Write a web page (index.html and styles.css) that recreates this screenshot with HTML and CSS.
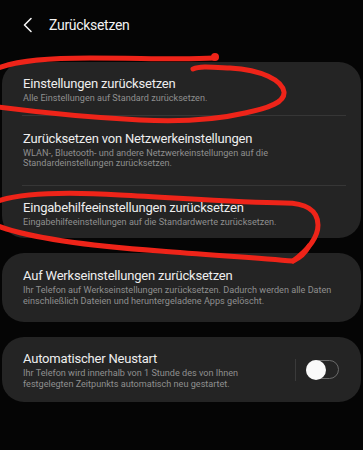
FILE: index.html
```html
<!DOCTYPE html>
<html lang="de">
<head>
<meta charset="utf-8">
<link rel="stylesheet" href="styles.css">
</head>
<body>
<div class="page">
  <header class="header">
    <svg class="back" width="12" height="16" viewBox="0 0 12 16"><path d="M9 1.5 L2.5 8 L9 14.5" fill="none" stroke="#f2f2f2" stroke-width="1.6" stroke-linecap="round" stroke-linejoin="round"/></svg>
    <h1 class="title">Zurücksetzen</h1>
  </header>

  <section class="card">
    <div class="item">
      <div class="item-title">Einstellungen zurücksetzen</div>
      <div class="item-sub">Alle Einstellungen auf Standard zurücksetzen.</div>
    </div>
    <div class="sep"></div>
    <div class="item item-tall">
      <div class="item-title">Zurücksetzen von Netzwerkeinstellungen</div>
      <div class="item-sub">WLAN-, Bluetooth- und andere Netzwerkeinstellungen auf die Standardeinstellungen zurücksetzen.</div>
    </div>
    <div class="sep"></div>
    <div class="item">
      <div class="item-title">Eingabehilfeeinstellungen zurücksetzen</div>
      <div class="item-sub">Eingabehilfeeinstellungen auf die Standardwerte zurücksetzen.</div>
    </div>
  </section>

  <section class="card">
    <div class="item item-tall">
      <div class="item-title">Auf Werkseinstellungen zurücksetzen</div>
      <div class="item-sub">Ihr Telefon auf Werkseinstellungen zurücksetzen. Dadurch werden alle Daten einschließlich Dateien und heruntergeladene Apps gelöscht.</div>
    </div>
  </section>

  <section class="card">
    <div class="item item-row">
      <div class="item-text">
        <div class="item-title">Automatischer Neustart</div>
        <div class="item-sub">Ihr Telefon wird innerhalb von 1 Stunde des von Ihnen festgelegten Zeitpunkts automatisch neu gestartet.</div>
      </div>
      <div class="vdiv"></div>
      <div class="switch"><span class="knob"></span></div>
    </div>
  </section>

  <svg class="scribble" width="363" height="450" viewBox="0 0 363 450">
    <g fill="none" stroke="#ee2419" stroke-width="5" stroke-linecap="round" stroke-linejoin="round">
      <path d="M-2,68 C20,60 50,58 90,58 C140,58 185,60 214,58"/>
      <path d="M193,69 C200,66 210,67 230,68 C262,70 282,80 284,92 C285,102 270,108 245,113 C215,120 180,122 140,120 C100,118 60,115 -2,107"/>
      <path d="M-2,201 C25,192 70,192 120,195 C180,198 240,203 285,203 C305,203 318,210 318,225 C318,240 305,252 293,261"/>
      <path d="M-2,226 C30,238 90,246 160,251 C210,255 260,258 293,261 C300,258 306,252 309,246"/>
    </g>
    <circle cx="215" cy="57" r="4" fill="#ee2419"/>
  </svg>
</div>
</body>
</html>
```

FILE: styles.css
```css
html, body {
  margin: 0;
  padding: 0;
  background: #050505;
}

.page {
  position: relative;
  width: 363px;
  height: 450px;
  overflow: hidden;
  font-family: Roboto, "Noto Sans", sans-serif;
  color: #f2f2f2;
}

.header {
  height: 62px;
  display: flex;
  align-items: center;
  padding-left: 22px;
  box-sizing: border-box;
  padding-bottom: 12px;
}

.back {
  display: block;
}

.title {
  margin: 0 0 0 15px;
  font-size: 14px;
  letter-spacing: -0.3px;
  font-weight: 400;
  color: #f2f2f2;
}

.card {
  margin: 0 2px 15px 2px;
  background: #242424;
  border-radius: 22px;
}

.item {
  padding: 13px 20px 11px 21px;
}

.item-tall {
  padding-top: 14px;
  padding-bottom: 16px;
}

.item-title {
  font-size: 13px;
  letter-spacing: -0.2px;
  line-height: 18px;
  color: #eeeeee;
}

.item-sub {
  font-size: 9.1px;
  line-height: 10.5px;
  color: #8f8f8f;
  margin-top: 0;
}

.sep {
  height: 1px;
  background: #363636;
  margin: 0 15px 0 20px;
}

.item-row {
  display: flex;
  align-items: center;
  padding-top: 13px;
  padding-bottom: 13px;
  padding-right: 22px;
}

.item-text {
  flex: 1;
}

.vdiv {
  width: 1px;
  height: 22px;
  background: #3a3a3a;
  margin: 0 10px 0 8px;
}

.switch {
  position: relative;
  width: 31px;
  height: 17px;
  border: 1.5px solid #6a6a6a;
  border-radius: 10px;
}

.knob {
  position: absolute;
  left: -1.5px;
  top: -1.5px;
  width: 20px;
  height: 20px;
  border-radius: 50%;
  background: #fafafa;
}

.scribble {
  position: absolute;
  left: 0;
  top: 0;
  pointer-events: none;
}
```
